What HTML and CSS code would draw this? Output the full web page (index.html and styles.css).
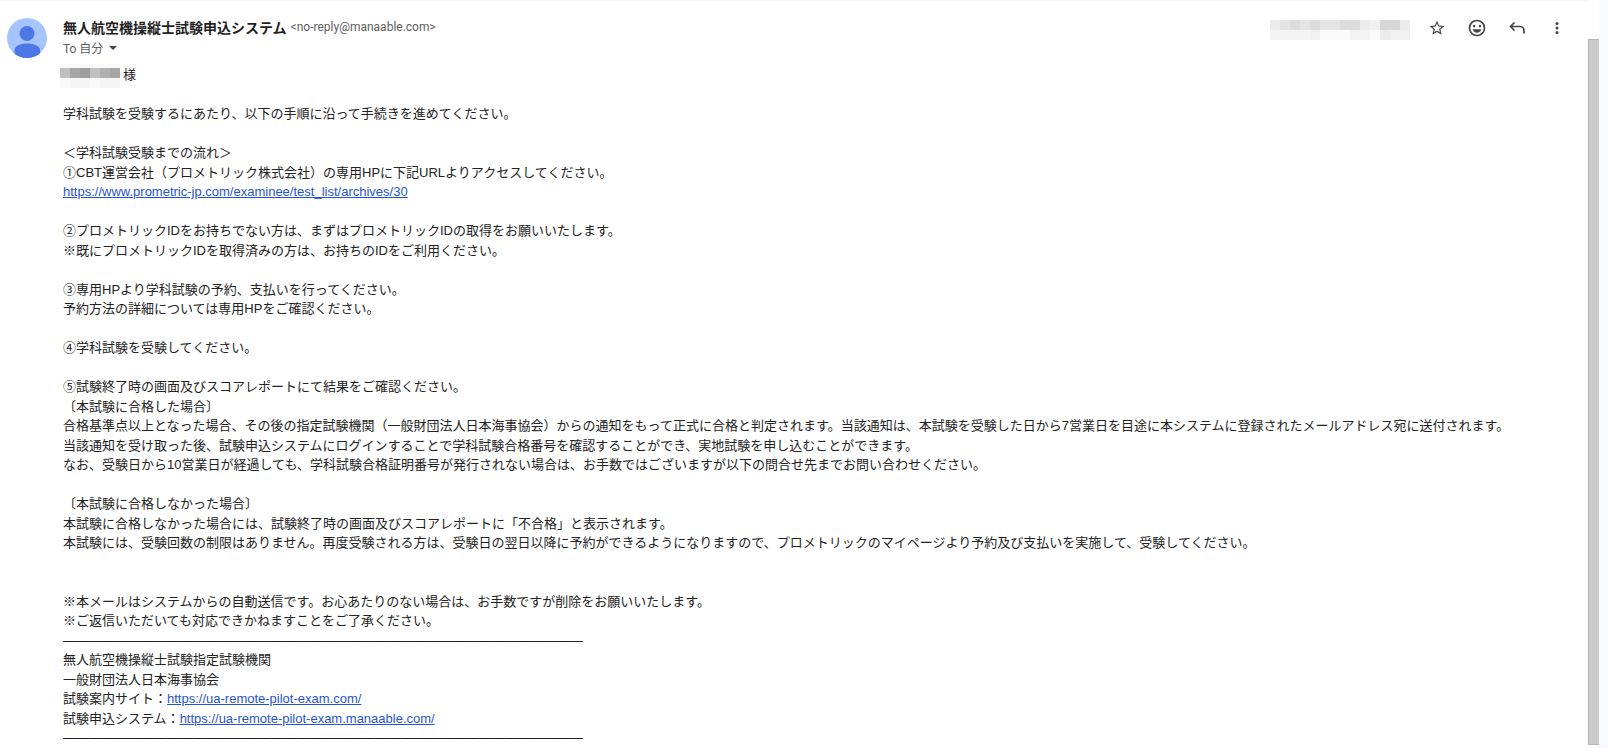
FILE: index.html
```
<!DOCTYPE html>
<html lang="ja">
<head>
    <meta charset="utf-8">
    <title>無人航空機操縦士試験申込システム</title>
    <link rel="stylesheet" href="styles.css">
</head>
<body>
    <div class="page">
        <main class="mail">
            <header class="mail-header">
                <svg class="avatar" viewBox="0 0 40 40" aria-hidden="true">
                    <defs><clipPath id="avatarClip"><circle cx="20" cy="20" r="20"/></clipPath></defs>
                    <g clip-path="url(#avatarClip)">
                        <rect width="40" height="40" fill="#a6c5ff"/>
                        <circle cx="20" cy="15.500" r="7.500" fill="#4d76e6"/>
                        <path d="M7.500 42V32C7.500 28 13 25.500 20 25.500S33 28 33 32V42Z" fill="#4d76e6"/>
                    </g>
                </svg>
                <div class="sender">
                    <div class="sender-line">
                        <span class="sender-name">無人航空機操縦士試験申込システム</span>
                        <span class="sender-email">&lt;no-reply@manaable.com&gt;</span>
                    </div>
                    <button class="recipient" type="button">To 自分
                        <svg class="caret" viewBox="0 0 8 4" aria-hidden="true"><path d="M0 0h8L4 4z" fill="#444746"/></svg>
                    </button>
                </div>
                <svg class="masked-date" viewBox="0 0 14 2" shape-rendering="crispEdges" aria-hidden="true">
                    <path fill="#ececec" d="M0 0h1v1H0zM9 0h1v1H9zM13 0h1v1h-1zM11 1h1v1h-1z"/>
                    <path fill="#e4e4e4" d="M1 0h1v1H1zM3 0h1v1H3zM5 0h2v1H5z"/>
                    <path fill="#dcdcdc" d="M2 0h1v1H2zM4 0h1v1H4zM7 0h2v1H7z"/>
                    <path fill="#f0f0f0" d="M10 0h1v1h-1zM4 1h1v1H4zM12 1h2v1h-2z"/>
                    <path fill="#d6d6d6" d="M11 0h2v1h-2z"/>
                    <path fill="#f4f4f4" d="M0 1h4v1H0zM8 1h2v1H8z"/>
                    <path fill="#fafafa" d="M5 1h3v1H5zM10 1h1v1h-1z"/>
                </svg>
                <div class="actions">
                    <button type="button" aria-label="スター">
                        <svg class="icon icon-star" viewBox="0 0 24 24"><path d="M22 9.240l-7.190-.62L12 2 9.190 8.630 2 9.240l5.460 4.730L5.820 21 12 17.270 18.180 21l-1.630-7.030L22 9.240zM12 15.400l-3.760 2.270 1-4.280-3.320-2.880 4.380-.38L12 6.100l1.710 4.040 4.380.38-3.320 2.880 1 4.280L12 15.400z"/></svg>
                    </button>
                    <button type="button" aria-label="リアクションを追加">
                        <svg class="icon" viewBox="0 0 24 24"><path fill-rule="evenodd" d="M12 2a10 10 0 1 0 0 20 10 10 0 0 0 0-20zm0 2a8 8 0 1 1 0 16 8 8 0 0 1 0-16z"/><circle cx="8.500" cy="9.500" r="1.500"/><circle cx="15.500" cy="9.500" r="1.500"/><path d="M6.700 13.500h10.600c-.7 2.600-2.800 4.200-5.300 4.200s-4.600-1.600-5.300-4.200z"/></svg>
                    </button>
                    <button type="button" aria-label="返信">
                        <svg class="icon" viewBox="0 0 20 20"><path d="M7.500 4.500L3.500 8.500l4 4M4 8.500h9c2.200 0 4 1.800 4 4V15.500" fill="none" stroke="#444746" stroke-width="1.700"/></svg>
                    </button>
                    <button type="button" aria-label="その他">
                        <svg class="icon" viewBox="0 0 20 20"><circle cx="10" cy="5.500" r="1.500"/><circle cx="10" cy="10" r="1.500"/><circle cx="10" cy="14.500" r="1.500"/></svg>
                    </button>
                </div>
            </header>

            <article class="mail-body">
                <p><svg class="masked-name" viewBox="0 0 60 24" shape-rendering="crispEdges" aria-hidden="true">
                    <path fill="#f9f9f9" d="M0 0h60v24H0z"/>
                    <path fill="#f5f5f5" d="M10 14h20v10H10zM40 14h20v10H40z"/>
                    <path fill="#c0c0c0" d="M0 4h10v10H0zM30 4h10v10H30z"/>
                    <path fill="#a6a6a6" d="M10 4h10v10H10zM50 4h10v10H50z"/>
                    <path fill="#9e9e9e" d="M20 4h10v10H20z"/>
                    <path fill="#b0b0b0" d="M40 4h10v10H40z"/>
                </svg>様</p>
                <br>
                <p>学科試験を受験するにあたり、以下の手順に沿って手続きを進めてください。</p>
                <br>
                <p>＜学科試験受験までの流れ＞</p>
                <p>①CBT運営会社（プロメトリック株式会社）の専用HPに下記URLよりアクセスしてください。</p>
                <p><a href="https://www.prometric-jp.com/examinee/test_list/archives/30">https://www.prometric-jp.com/examinee/test_list/archives/30</a></p>
                <br>
                <p>②プロメトリックIDをお持ちでない方は、まずはプロメトリックIDの取得をお願いいたします。</p>
                <p>※既にプロメトリックIDを取得済みの方は、お持ちのIDをご利用ください。</p>
                <br>
                <p>③専用HPより学科試験の予約、支払いを行ってください。</p>
                <p>予約方法の詳細については専用HPをご確認ください。</p>
                <br>
                <p>④学科試験を受験してください。</p>
                <br>
                <p>⑤試験終了時の画面及びスコアレポートにて結果をご確認ください。</p>
                <p>〔本試験に合格した場合〕</p>
                <p>合格基準点以上となった場合、その後の指定試験機関（一般財団法人日本海事協会）からの通知をもって正式に合格と判定されます。当該通知は、本試験を受験した日から7営業日を目途に本システムに登録されたメールアドレス宛に送付されます。</p>
                <p>当該通知を受け取った後、試験申込システムにログインすることで学科試験合格番号を確認することができ、実地試験を申し込むことができます。</p>
                <p>なお、受験日から10営業日が経過しても、学科試験合格証明番号が発行されない場合は、お手数ではございますが以下の問合せ先までお問い合わせください。</p>
                <br>
                <p>〔本試験に合格しなかった場合〕</p>
                <p>本試験に合格しなかった場合には、試験終了時の画面及びスコアレポートに「不合格」と表示されます。</p>
                <p>本試験には、受験回数の制限はありません。再度受験される方は、受験日の翌日以降に予約ができるようになりますので、プロメトリックのマイページより予約及び支払いを実施して、受験してください。</p>
                <br>
                <br>
                <p>※本メールはシステムからの自動送信です。お心あたりのない場合は、お手数ですが削除をお願いいたします。</p>
                <p>※ご返信いただいても対応できかねますことをご了承ください。</p>
                <p>――――――――――――――――――――――――――――――――――――――――</p>
                <p>無人航空機操縦士試験指定試験機関</p>
                <p>一般財団法人日本海事協会</p>
                <p>試験案内サイト：<a href="https://ua-remote-pilot-exam.com/">https://ua-remote-pilot-exam.com/</a></p>
                <p>試験申込システム：<a href="https://ua-remote-pilot-exam.manaable.com/">https://ua-remote-pilot-exam.manaable.com/</a></p>
                <p>――――――――――――――――――――――――――――――――――――――――</p>
            </article>
        </main>
        <div class="scroll-track"><div class="scroll-thumb"></div></div>
    </div>
</body>
</html>
```
FILE: styles.css
```
* {
    box-sizing: border-box;
}
body {
    margin: 0;
    background: #f8fafd;
    color: #222;
    font-family: "Liberation Sans", "Noto Sans CJK JP", sans-serif;
    font-size: 13px;
    line-height: 1.5;
}
p {
    margin: 0;
}
a {
    color: #1f55d3;
}
button {
    border: 0;
    padding: 0;
    background: none;
    font: inherit;
    color: inherit;
    cursor: pointer;
}
.page {
    display: flex;
    min-height: 100vh;
    margin-right: 9px;
    background: #fff;
}
.mail {
    flex: 1;
    min-width: 0;
    border-top: 1px solid #f6f8fc;
}

/* Header */
.mail-header {
    display: flex;
    align-items: flex-start;
    height: 64px;
    padding: 17px 11px 0 7px;
}
.avatar {
    width: 40px;
    height: 40px;
    margin-right: 16px;
}
.sender {
    flex: 1;
    font-family: "Noto Sans CJK JP", sans-serif;
}
.sender-line {
    display: flex;
    align-items: center;
    gap: 4px;
    line-height: 18px;
}
.sender-name {
    font-size: 14px;
    font-weight: bold;
    color: #1f1f1f;
}
.sender-email {
    font-family: Roboto, sans-serif;
    font-size: 12px;
    color: #5e5e5e;
}
.recipient {
    display: flex;
    align-items: center;
    gap: 6px;
    font-size: 12px;
    line-height: 24px;
    color: #5e5e5e;
}
.caret {
    width: 8px;
    height: 4px;
}
.masked-date {
    width: 140px;
    height: 20px;
    margin-top: 2px;
    margin-right: 7px;
}
.actions {
    display: flex;
}
.actions button {
    display: flex;
    align-items: center;
    justify-content: center;
    width: 40px;
    height: 20px;
}
.icon {
    width: 20px;
    height: 20px;
    fill: #444746;
}
.icon-star {
    width: 18px;
    height: 18px;
}

/* Message text */
.mail-body {
    padding-left: 63px;
}
.masked-name {
    width: 60px;
    height: 24px;
    margin: -4px 3px -4px -3px;
    vertical-align: middle;
}

/* Scrollbar */
.scroll-track {
    width: 11px;
    padding: 39px 0 3px;
    display: flex;
}
.scroll-thumb {
    flex: 1;
    background: #cbcbcb;
    border: 1px solid #b5b5b5;
    border-right: 0;
}
```
